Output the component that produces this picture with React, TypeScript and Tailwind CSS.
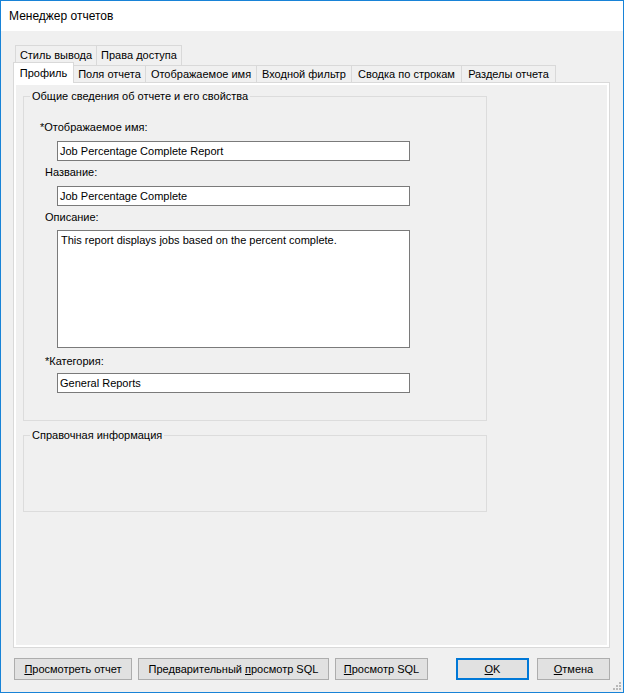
import React from "react";

const font = "font-['Liberation_Sans',Arial,sans-serif]";

function Tab({ label, width, first }: { label: string; width: number; first?: boolean }) {
    return (
        <div
            className={`h-full flex items-center justify-center border-t border-r border-[#d9d9d9] bg-[#f0f0f0] ${first ? "border-l" : ""}`}
            style={{ width }}
        >
            {label}
        </div>
    );
}

function Button({ children, width, primary }: { children: React.ReactNode; width: number; primary?: boolean }) {
    return (
        <button
            className={`h-[22px] flex items-center justify-center bg-[#e1e1e1] text-[11px] text-black ${primary ? "border-2 border-[#0078d7]" : "border border-[#adadad]"}`}
            style={{ width }}
        >
            {children}
        </button>
    );
}

export default function App() {
    return (
        <div className={`relative w-[624px] h-[693px] border border-[#1883d7] bg-[#f0f0f0] flex flex-col text-black ${font}`}>
            <div className="h-[30px] bg-white flex items-center pl-[8px] text-[12px]">Менеджер отчетов</div>

            <div className="flex-1 flex flex-col pt-[14px] pl-[12px] pr-[13px] pb-[12px] text-[11px]">
                {/* first row of tabs */}
                <div className="flex h-[20px] ml-[2px]">
                    <Tab label="Стиль вывода" width={82} first />
                    <Tab label="Права доступа" width={85} />
                </div>
                {/* second row of tabs */}
                <div className="flex items-end h-[17px]">
                    <div className="relative z-10 h-[21px] -mb-[1px] w-[61px] bg-white border-l border-t border-r border-[#d9d9d9] flex items-center justify-center">
                        Профиль
                    </div>
                    <Tab label="Поля отчета" width={72} />
                    <Tab label="Отображаемое имя" width={111} />
                    <Tab label="Входной фильтр" width={95} />
                    <Tab label="Сводка по строкам" width={110} />
                    <Tab label="Разделы отчета" width={94} />
                </div>

                <div className="flex-1 flex border border-[#d9d9d9] bg-white p-[2px]">
                    <div className="flex-1 bg-[#f0f0f0] flex flex-col">
                        <fieldset className="ml-[7px] mt-[4px] w-[464px] border border-[#dcdcdc] pb-[27px]">
                            <legend className="ml-[6px] px-[2px] leading-[14px]">Общие сведения об отчете и его свойства</legend>
                            <div className="flex flex-col">
                                <div className="mt-[18px] ml-[16px] leading-[13px]">*Отображаемое имя:</div>
                                <div className="mt-[7px] ml-[33px] w-[353px] h-[20px] border border-[#7a7a7a] bg-white pl-[2px] flex items-center">
                                    Job Percentage Complete Report
                                </div>
                                <div className="mt-[5px] ml-[21px] leading-[13px]">Название:</div>
                                <div className="mt-[7px] ml-[33px] w-[353px] h-[20px] border border-[#7a7a7a] bg-white pl-[2px] flex items-center">
                                    Job Percentage Complete
                                </div>
                                <div className="mt-[5px] ml-[21px] leading-[13px]">Описание:</div>
                                <div className="mt-[6px] ml-[33px] w-[353px] h-[118px] border border-[#7a7a7a] bg-white pl-[3px] pt-[3px] leading-[13px]">
                                    This report displays jobs based on the percent complete.
                                </div>
                                <div className="mt-[7px] ml-[21px] leading-[13px]">*Категория:</div>
                                <div className="mt-[5px] ml-[33px] w-[353px] h-[20px] border border-[#7a7a7a] bg-white pl-[2px] flex items-center">
                                    General Reports
                                </div>
                            </div>
                        </fieldset>

                        <fieldset className="ml-[7px] mt-[7px] w-[464px] border border-[#dcdcdc]">
                            <legend className="ml-[6px] px-[2px] leading-[14px]">Справочная информация</legend>
                            <div className="h-[69px]" />
                        </fieldset>
                    </div>
                </div>

                <div className="flex mt-[10px] ml-[1px]">
                    <Button width={118}><span className="underline">П</span>росмотреть отчет</Button>
                    <div className="ml-[6px]">
                        <Button width={191}>Предварительный&nbsp;<span className="underline">п</span>росмотр SQL</Button>
                    </div>
                    <div className="ml-[6px]">
                        <Button width={93}><span className="underline">П</span>росмотр SQL</Button>
                    </div>
                    <div className="ml-[28px]">
                        <Button width={73} primary><span className="underline">O</span>K</Button>
                    </div>
                    <div className="ml-[8px]">
                        <Button width={73}><span className="underline">О</span>тмена</Button>
                    </div>
                </div>
            </div>

            {/* size grip */}
            <svg className="absolute right-[2px] bottom-[2px]" width="9" height="9" viewBox="0 0 9 9">
                <rect x="7" y="1" width="2" height="2" fill="#b8b8b8" />
                <rect x="4" y="4" width="2" height="2" fill="#b8b8b8" />
                <rect x="7" y="4" width="2" height="2" fill="#b8b8b8" />
                <rect x="1" y="7" width="2" height="2" fill="#b8b8b8" />
                <rect x="4" y="7" width="2" height="2" fill="#b8b8b8" />
                <rect x="7" y="7" width="2" height="2" fill="#b8b8b8" />
            </svg>
        </div>
    );
}
